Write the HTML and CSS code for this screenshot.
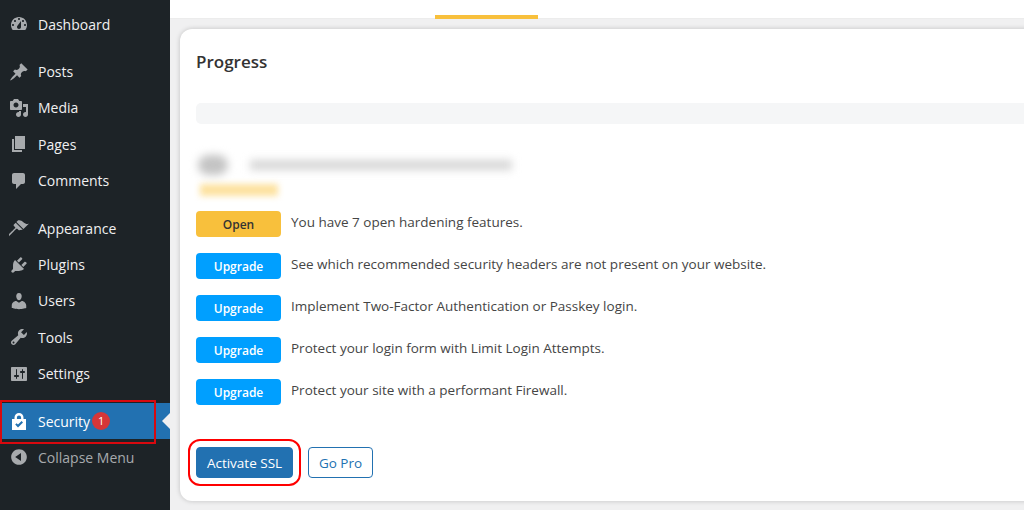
FILE: index.html
```html
<!DOCTYPE html>
<html lang="en">
<head>
    <meta charset="UTF-8">
    <meta name="viewport" content="width=device-width, initial-scale=1.0">
    <title>Security Progress</title>
    <link rel="stylesheet" href="styles.css">
</head>
<body>
    <nav class="sidebar">
        <ul class="menu">
            <li class="menu-item"><svg class="menu-icon" viewBox="0 0 20 20"><path fill-rule="evenodd" d="M3.76 16h12.48c1.1-1.37 1.76-3.11 1.76-5 0-4.42-3.58-8-8-8s-8 3.58-8 8c0 1.89.66 3.63 1.76 5zM10 4c.55 0 1 .45 1 1s-.45 1-1 1-1-.45-1-1 .45-1 1-1zM6 6c.55 0 1 .45 1 1s-.45 1-1 1-1-.45-1-1 .45-1 1-1zm8 0c.55 0 1 .45 1 1s-.45 1-1 1-1-.45-1-1 .45-1 1-1zm-5.37 5.55L12 7v6c0 1.1-.9 2-2 2s-2-.9-2-2c0-.57.24-1.08.63-1.45zM4 10c.55 0 1 .45 1 1s-.45 1-1 1-1-.45-1-1 .45-1 1-1zm12 0c.55 0 1 .45 1 1s-.45 1-1 1-1-.45-1-1 .45-1 1-1z"/></svg>Dashboard</li>
            <li class="menu-item group-start"><svg class="menu-icon" viewBox="0 0 20 20"><path d="M10.44 3.02l1.82-1.82 6.36 6.35-1.83 1.82c-1.05-.68-2.48-.57-3.41.36l-.75.75c-.92.93-1.04 2.35-.35 3.41l-1.83 1.82-2.41-2.41-2.8 2.79c-.42.42-3.38 2.71-3.8 2.29s1.86-3.39 2.28-3.81l2.79-2.79L4.1 9.36l1.83-1.82c1.05.69 2.48.57 3.4-.36l.75-.75c.93-.92 1.05-2.35.36-3.41z"/></svg>Posts</li>
            <li class="menu-item"><svg class="menu-icon" viewBox="0 0 20 20"><path fill-rule="evenodd" d="M13 11V4c0-.55-.45-1-1-1h-1.67L9 1H5L3.67 3H2c-.55 0-1 .45-1 1v7c0 .55.45 1 1 1h10c.55 0 1-.45 1-1zM7 4.5c1.38 0 2.5 1.12 2.5 2.5S8.38 9.5 7 9.5 4.5 8.38 4.5 7 5.62 4.5 7 4.5zM14 6h5v10.5c0 1.38-1.12 2.5-2.5 2.5S14 17.88 14 16.5s1.12-2.5 2.5-2.5c.17 0 .34.02.5.05V9h-3V6zm-4 8.05V13h2v3.5c0 1.38-1.12 2.5-2.5 2.5S7 17.88 7 16.5 8.12 14 9.5 14c.17 0 .34.02.5.05z"/></svg>Media</li>
            <li class="menu-item"><svg class="menu-icon" viewBox="0 0 20 20"><path d="M6 15V2h10v13H6zm-1 1h8v2H3V5h2v11z"/></svg>Pages</li>
            <li class="menu-item"><svg class="menu-icon" viewBox="0 0 20 20"><path d="M5 2h9c1.1 0 2 .9 2 2v7c0 1.1-.9 2-2 2h-2l-5 5v-5H5c-1.1 0-2-.9-2-2V4c0-1.1.9-2 2-2z"/></svg>Comments</li>
            <li class="menu-item group-start"><svg class="menu-icon" viewBox="0 0 20 20"><path d="M14.48 11.06L7.41 3.99l1.5-1.5c.5-.56 2.3-.47 3.51.32 1.21.8 1.43 1.28 2.91 2.1 1.18.64 2.45 1.26 4.45.85zm-.71.71L6.7 4.7 4.93 6.47c-.39.39-.39 1.02 0 1.41l1.06 1.06c.39.39.39 1.03 0 1.42-.6.6-6.76 6.6-7.18 7.02-.42.42.82 1.22 1.24.8.42-.42 6.42-6.58 7.02-7.18.39-.39 1.03-.39 1.42 0l1.06 1.06c.39.39 1.02.39 1.41 0z"/></svg>Appearance</li>
            <li class="menu-item"><svg class="menu-icon" viewBox="0 0 20 20"><path d="M13.11 4.36L9.87 7.6 8 5.73l3.24-3.24c.35-.34 1.05-.2 1.56.32.52.51.66 1.21.31 1.55zm-8 1.77l.91-1.12 9.01 9.01-1.19.84c-.71.71-2.63 1.16-3.82 1.16H6.14L4.9 17.26c-.59.59-1.54.59-2.12 0-.59-.58-.59-1.53 0-2.12l1.24-1.24v-3.88c0-1.13.4-3.19 1.09-3.89zm7.26 3.97l3.24-3.24c.34-.35 1.04-.21 1.55.31.52.51.66 1.21.31 1.55l-3.24 3.25z"/></svg>Plugins</li>
            <li class="menu-item"><svg class="menu-icon" viewBox="0 0 20 20"><path d="M10 9.25c-2.27 0-2.73-3.44-2.73-3.44C7 4.02 7.82 2 9.97 2c2.16 0 2.98 2.02 2.71 3.81 0 0-.41 3.44-2.68 3.44zm0 2.57L12.72 10c2.39 0 4.52 2.33 4.52 4.53v2.49s-3.65 1.13-7.24 1.13c-3.65 0-7.24-1.13-7.24-1.13v-2.49c0-2.25 1.94-4.48 4.47-4.48z"/></svg>Users</li>
            <li class="menu-item"><svg class="menu-icon" viewBox="0 0 20 20"><path fill-rule="evenodd" d="M16.68 9.77c-1.34 1.34-3.3 1.67-4.95.99l-5.41 6.52c-.99.99-2.59.99-3.58 0s-.99-2.59 0-3.57l6.52-5.42c-.68-1.65-.35-3.61.99-4.95 1.28-1.28 3.12-1.62 4.72-1.06l-2.89 2.89 2.82 2.82 2.86-2.87c.53 1.58.18 3.39-1.08 4.65zM3.81 16.21c.4.39 1.04.39 1.43 0 .4-.4.4-1.04 0-1.43-.39-.4-1.03-.4-1.43 0-.39.39-.39 1.03 0 1.43z"/></svg>Tools</li>
            <li class="menu-item"><svg class="menu-icon" viewBox="0 0 20 20"><path fill-rule="evenodd" d="M18 16V4c0-.55-.45-1-1-1H3c-.55 0-1 .45-1 1v12c0 .55.45 1 1 1h14c.55 0 1-.45 1-1zM8 11h1c.55 0 1 .45 1 1s-.45 1-1 1H8v1.5c0 .28-.22.5-.5.5s-.5-.22-.5-.5V13H6c-.55 0-1-.45-1-1s.45-1 1-1h1V5.5c0-.28.22-.5.5-.5s.5.22.5.5V11zm5-2h-1c-.55 0-1-.45-1-1s.45-1 1-1h1V5.5c0-.28.22-.5.5-.5s.5.22.5.5V7h1c.55 0 1 .45 1 1s-.45 1-1 1h-1v5.5c0 .28-.22.5-.5.5s-.5-.22-.5-.5V9z"/></svg>Settings</li>
            <li class="menu-item group-start current"><svg class="menu-icon" viewBox="0 0 20 20"><path fill-rule="evenodd" d="M5.5 8V6.5a4.5 4.5 0 0 1 9 0V8H17v11H3V8h2.5zm2.4 0h4.2V6.5a2.1 2.1 0 0 0-4.2 0V8zm-1.7 5.6l2.8 2.8 5-5-1.4-1.3-3.6 3.5-1.4-1.4-1.4 1.4z"/></svg>Security<span class="count">1</span></li>
            <li class="menu-item collapse"><svg class="menu-icon" viewBox="0 0 20 20"><path d="M10 2.16c4.33 0 7.84 3.51 7.84 7.84s-3.51 7.84-7.84 7.84S2.16 14.33 2.16 10 5.71 2.16 10 2.16zm2 11.72V6.12L6.18 9.97z"/></svg>Collapse Menu</li>
        </ul>
    </nav>

    <main class="content">
        <div class="topbar"><span class="active-tab"></span></div>

        <section class="card">
            <h2 class="card-title">Progress</h2>
            <div class="progress-bar"></div>

            <div class="blurred-score">
                <span class="blur-num"></span>
                <span class="blur-text"></span>
            </div>
            <div class="blur-label"></div>

            <ul class="task-list">
                <li class="task"><span class="badge open">Open</span><span class="task-text">You have 7 open hardening features.</span></li>
                <li class="task"><span class="badge upgrade">Upgrade</span><span class="task-text">See which recommended security headers are not present on your website.</span></li>
                <li class="task"><span class="badge upgrade">Upgrade</span><span class="task-text">Implement Two-Factor Authentication or Passkey login.</span></li>
                <li class="task"><span class="badge upgrade">Upgrade</span><span class="task-text">Protect your login form with Limit Login Attempts.</span></li>
                <li class="task"><span class="badge upgrade">Upgrade</span><span class="task-text">Protect your site with a performant Firewall.</span></li>
            </ul>

            <div class="card-footer">
                <button class="btn btn-primary">Activate SSL</button>
                <button class="btn btn-outline">Go Pro</button>
            </div>
        </section>
    </main>
</body>
</html>
```

FILE: styles.css
```css
* {
    margin: 0;
    padding: 0;
    box-sizing: border-box;
}

html, body {
    height: 510px;
    overflow: hidden;
}

body {
    display: flex;
    background: #f0f0f1;
    font-family: "Open Sans", "Noto Sans", sans-serif;
    color: #3c434a;
}

.sidebar {
    width: 170px;
    flex-shrink: 0;
    background: #1d2327;
    padding-top: 6px;
}

.menu {
    list-style: none;
}

.menu-item {
    position: relative;
    display: flex;
    align-items: center;
    height: 36.4px;
    padding-left: 9px;
    color: #f0f0f1;
    font-size: 14px;
}

.group-start {
    margin-top: 11px;
}

.menu-icon {
    width: 20px;
    height: 20px;
    margin-right: 9px;
    fill: #a7aaad;
    flex-shrink: 0;
}

.current {
    background: #2271b1;
    color: #fff;
}

.current .menu-icon {
    fill: #fff;
}

/* red annotation around the menu item */
.current::before {
    content: "";
    position: absolute;
    left: 0;
    top: -3px;
    width: 152px;
    height: 40px;
    border: 2px solid #d8090f;
}

/* pointer towards the page */
.current::after {
    content: "";
    position: absolute;
    right: 0;
    top: 10px;
    border: 8px solid transparent;
    border-left: 0;
    border-right-color: #f0f0f1;
}

.count {
    width: 18px;
    height: 18px;
    margin-left: 2px;
    border-radius: 50%;
    background: #d63638;
    color: #fff;
    font-size: 11px;
    line-height: 18px;
    text-align: center;
}

.collapse {
    color: #a7aaad;
    font-size: 14px;
}

.content {
    flex: 1;
    min-width: 0;
}

.topbar {
    height: 19px;
    background: #fff;
    border-bottom: 1px solid #ececec;
    padding-left: 265px;
}

.active-tab {
    display: block;
    width: 103px;
    height: 19px;
    border-bottom: 4px solid #f8c03c;
}

.card {
    width: 900px;
    height: 472px;
    margin: 10px 0 0 10px;
    padding: 0 16px;
    background: #fff;
    border-radius: 12px;
    box-shadow: 0 0 5px rgba(0, 0, 0, 0.2);
}

.card-title {
    padding-top: 22px;
    font-size: 17px;
    line-height: 22px;
    font-weight: 600;
    color: #333;
}

.progress-bar {
    height: 21px;
    margin-top: 30px;
    border-radius: 5px;
    background: #f5f6f7;
}

.blurred-score {
    display: flex;
    align-items: center;
    gap: 22px;
    height: 24px;
    margin-top: 29px;
    filter: blur(4px);
}

.blur-num {
    width: 30px;
    height: 20px;
    margin-left: 2px;
    border-radius: 10px;
    background: #c4c4c4;
}

.blur-text {
    width: 262px;
    height: 10px;
    background: #d6d6d6;
}

.blur-label {
    width: 78px;
    height: 12px;
    margin: 7px 0 0 4px;
    background: #fde2a0;
    filter: blur(3px);
}

.task-list {
    list-style: none;
    margin-top: 15px;
    display: flex;
    flex-direction: column;
    gap: 16px;
}

.task {
    display: flex;
    gap: 10px;
    height: 26px;
}

.badge {
    width: 85px;
    height: 26px;
    border-radius: 4px;
    font-size: 12px;
    font-weight: 600;
    line-height: 27px;
    text-align: center;
}

.open {
    background: #f8c03c;
    color: #333;
}

.upgrade {
    background: #009fff;
    color: #fff;
}

.task-text {
    font-size: 13.5px;
    line-height: 22px;
    color: #454545;
}

.card-footer {
    display: flex;
    gap: 15px;
    margin-top: 42px;
}

.btn {
    height: 31px;
    border-radius: 4px;
    font-family: inherit;
    font-size: 13.5px;
}

.btn-primary {
    width: 97px;
    background: #2271b1;
    border: 1px solid #2271b1;
    color: #fff;
    outline: 2px solid #f00;
    outline-offset: 6px;
}

.btn-outline {
    width: 65px;
    background: #fff;
    border: 1px solid #2271b1;
    color: #2271b1;
}
```
